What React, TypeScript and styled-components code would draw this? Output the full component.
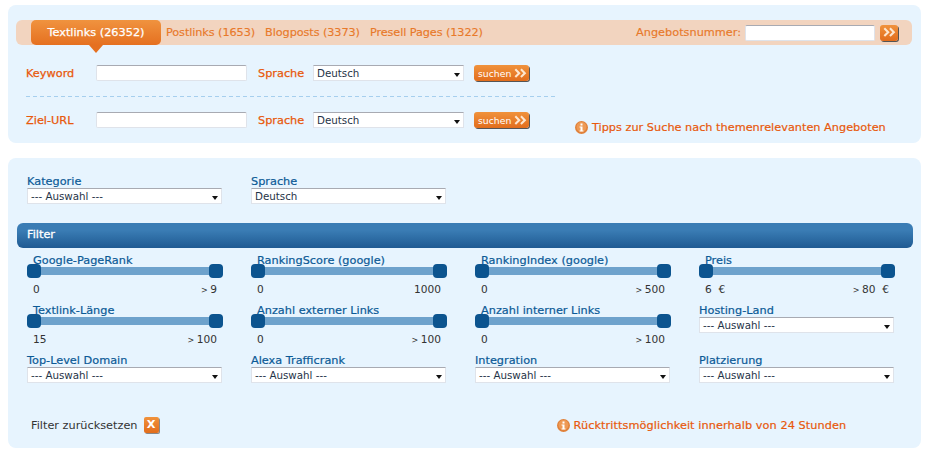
import * as React from 'react';
import styled, { createGlobalStyle } from 'styled-components';

const GlobalStyle = createGlobalStyle`
  html, body {
    margin: 0;
    padding: 0;
    background: #fff;
    font-family: "DejaVu Sans", Verdana, sans-serif;
    font-size: 11.3px;
  }
`;

const Page = styled.div`
  width: 934px;
  height: 453px;
  padding: 5px 13px 0 8px;
  box-sizing: border-box;
  display: flex;
  flex-direction: column;
  gap: 15px;
`;

const Card = styled.div<{ $height: number }>`
  height: ${p => p.$height}px;
  box-sizing: border-box;
  background: #e7f4fe;
  border-radius: 8px;
`;

const SearchCard = styled(Card)`
  padding: 15px 9px 0 8px;
`;

const TabBar = styled.div`
  height: 25px;
  background: #f2d4bf;
  border-radius: 6px;
  display: flex;
  align-items: center;
  padding: 0 14px 0 15px;
`;

const ActiveTab = styled.div`
  position: relative;
  width: 130px;
  height: 25px;
  margin-right: 5px;
  border-radius: 5px;
  background: linear-gradient(#f0933f, #e57020);
  color: #fff;
  -webkit-text-stroke: 0.25px #fff;
  text-align: center;
  line-height: 25px;

  &::after {
    content: '';
    position: absolute;
    left: 58px;
    top: 25px;
    border: 7px solid transparent;
    border-bottom: 0;
    border-top: 8px solid #e57020;
  }
`;

const Tab = styled.div`
  color: #e8792a;
  margin-right: 10px;
  letter-spacing: -0.1px;
  -webkit-text-stroke: 0.15px #e8792a;
`;

const OfferLabel = styled(Tab)`
  margin-right: 4px;
  letter-spacing: 0;
`;

const Spacer = styled.div`
  flex: 1;
`;

const TextInput = styled.input<{ $width: number }>`
  width: ${p => p.$width}px;
  height: 16px;
  box-sizing: border-box;
  padding: 0;
  background: #fff;
  border: 1px solid #dfe3ea;
  border-top-color: #a8aab2;
  border-radius: 2px;
  outline: none;
`;

const ArrowButton = styled.button`
  width: 18px;
  height: 16px;
  margin-left: 5px;
  padding: 0;
  border: 0;
  border-radius: 3px;
  background: linear-gradient(#f0923c, #e26d1c);
  box-shadow: 1px 1px 0 #555;
  display: flex;
  align-items: center;
  justify-content: center;
`;

const SearchRow = styled.div<{ $top?: number }>`
  height: 16px;
  display: flex;
  align-items: center;
  padding-left: 10px;
  margin-top: ${p => p.$top ?? 0}px;
`;

const SearchLabel = styled.div<{ $width: number; $left?: number }>`
  width: ${p => p.$width}px;
  margin-left: ${p => p.$left ?? 0}px;
  color: #e8590c;
  -webkit-text-stroke: 0.25px #e8590c;
`;

const SelectBox = styled.div<{ $width: number }>`
  position: relative;
  width: ${p => p.$width}px;
  height: 16px;
  box-sizing: border-box;
  background: #fff;
  border: 1px solid #dfe3ea;
  border-top-color: #a8aab2;
  padding-left: 3px;
  color: #1f3347;
  font-size: 10.3px;
  line-height: 14px;

  &::after {
    content: '';
    position: absolute;
    right: 3px;
    top: 7px;
    border: 3.5px solid transparent;
    border-bottom: 0;
    border-top: 4px solid #111;
  }
`;

const SearchButton = styled.button`
  width: 55px;
  height: 16px;
  margin-left: 10px;
  padding: 0 0 0 4px;
  border: 0;
  border-radius: 3px;
  background: linear-gradient(#f0923c, #e26d1c);
  box-shadow: 1px 1px 0 #555;
  color: #fff;
  font-family: inherit;
  font-size: 9.3px;
  display: flex;
  align-items: center;
  gap: 3px;
`;

const DashLine = styled.div`
  width: 530px;
  height: 1px;
  margin: 15px 0 15px 10px;
  background: repeating-linear-gradient(90deg, #a6cfee 0 4px, transparent 4px 7px);
`;

const TipRow = styled.div<{ $left: number; $top?: number; $spacing?: number }>`
  display: flex;
  align-items: center;
  gap: 4px;
  margin-left: ${p => p.$left}px;
  margin-top: ${p => p.$top ?? 0}px;
  color: #e8590c;
  letter-spacing: ${p => p.$spacing ?? 0}px;
  -webkit-text-stroke: 0.2px #e8590c;
`;

const FilterCard = styled(Card)`
  padding: 16px 8px 0 9px;
`;

const TopFields = styled.div`
  display: flex;
  gap: 29px;
  padding-left: 10px;
`;

const Field = styled.div`
  width: 195px;
`;

const FieldLabel = styled.div<{ $indent?: number }>`
  height: 15px;
  line-height: 15px;
  padding-left: ${p => p.$indent ?? 0}px;
  color: #0b5a96;
  -webkit-text-stroke: 0.2px #0b5a96;
  white-space: nowrap;
`;

const SelectLabel = styled(FieldLabel)`
  height: 14px;
`;

const FilterBar = styled.div`
  height: 25px;
  margin-top: 19px;
  padding-left: 10px;
  border-radius: 6px;
  background: linear-gradient(#3a7cb4 30%, #1f5a92);
  color: #fff;
  -webkit-text-stroke: 0.3px #fff;
  line-height: 24px;
`;

const FilterGrid = styled.div`
  display: grid;
  grid-template-columns: repeat(4, 195px);
  grid-auto-rows: 50px;
  column-gap: 29px;
  padding: 5px 0 0 10px;
`;

const Track = styled.div`
  position: relative;
  height: 8px;
  margin: -1px -1px 0 0;
  background: #6ea2cc;
`;

const Thumb = styled.span<{ $side: 'left' | 'right' }>`
  position: absolute;
  top: -3px;
  ${p => p.$side}: 0;
  width: 14px;
  height: 14px;
  border-radius: 4px;
  background: #0c548f;
`;

const Values = styled.div`
  display: flex;
  justify-content: space-between;
  padding: 0 5px 0 6px;
  margin-top: 8px;
  color: #333;
  font-size: 10.6px;
  white-space: pre;
`;

const Gt = styled.small`
  font-size: 8px;
`;

const BottomRow = styled.div`
  display: flex;
  align-items: center;
  margin-top: 14px;
  padding-left: 14px;
  color: #333;
`;

const ResetButton = styled.span`
  width: 15px;
  height: 16px;
  margin-left: 6px;
  border-radius: 2px;
  background: linear-gradient(#f0923c, #e26d1c);
  box-shadow: 1px 1px 0 #888;
  color: #fff;
  font-weight: 700;
  line-height: 16px;
  text-align: center;
`;

const Chevrons = ({ size }: { size: number }) => (
  <svg width={size} height={size * 0.8} viewBox="0 0 15 12" fill="none" stroke="#fde6cf" strokeWidth="2.4">
    <path d="M1.5 1.5 6 6l-4.500 4.500M8 1.500 12.500 6 8 10.500" />
  </svg>
);

const InfoIcon = () => (
  <svg width="13" height="13" viewBox="0 0 13 13">
    <circle cx="6.500" cy="6.500" r="6.500" fill="#e0813a" />
    <circle cx="6.500" cy="6" r="5" fill="#ee9a55" />
    <rect x="5.500" y="2.500" width="2" height="2" fill="#fff" />
    <path d="M4.500 5.500h3v4h1v1h-4v-1h1v-3h-1z" fill="#fff" />
  </svg>
);

const SliderField = ({ label, low, high }: { label: string; low: string; high: string }) => (
  <Field>
    <FieldLabel $indent={6}>{label}</FieldLabel>
    <Track>
      <Thumb $side="left" />
      <Thumb $side="right" />
    </Track>
    <Values>
      <span>{low}</span>
      <span>
        {high.startsWith('>') ? <Gt>&gt; </Gt> : null}
        {high.replace('> ', '')}
      </span>
    </Values>
  </Field>
);

const SelectField = ({ label, value = '--- Auswahl ---' }: { label: string; value?: string }) => (
  <Field>
    <SelectLabel>{label}</SelectLabel>
    <SelectBox $width={195}>{value}</SelectBox>
  </Field>
);

const LanguageRow = ({ label, top }: { label: string; top?: number }) => (
  <SearchRow $top={top}>
    <SearchLabel $width={70}>{label}</SearchLabel>
    <TextInput $width={151} />
    <SearchLabel $width={55} $left={11}>Sprache</SearchLabel>
    <SelectBox $width={151}>Deutsch</SelectBox>
    <SearchButton>
      suchen
      <Chevrons size={13} />
    </SearchButton>
  </SearchRow>
);

export default function App() {
  return (
    <Page>
      <GlobalStyle />
      <SearchCard $height={138}>
        <TabBar>
          <ActiveTab>Textlinks (26352)</ActiveTab>
          <Tab>Postlinks (1653)</Tab>
          <Tab>Blogposts (3373)</Tab>
          <Tab>Presell Pages (1322)</Tab>
          <Spacer />
          <OfferLabel>Angebotsnummer:</OfferLabel>
          <TextInput $width={130} />
          <ArrowButton>
            <Chevrons size={13} />
          </ArrowButton>
        </TabBar>
        <LanguageRow label="Keyword" top={20} />
        <DashLine />
        <LanguageRow label="Ziel-URL" />
        <TipRow $left={559} $top={-7}>
          <InfoIcon />
          Tipps zur Suche nach themenrelevanten Angeboten
        </TipRow>
      </SearchCard>
      <FilterCard $height={290}>
        <TopFields>
          <SelectField label="Kategorie" />
          <SelectField label="Sprache" value="Deutsch" />
        </TopFields>
        <FilterBar>Filter</FilterBar>
        <FilterGrid>
          <SliderField label="Google-PageRank" low="0" high="> 9" />
          <SliderField label="RankingScore (google)" low="0" high="1000" />
          <SliderField label="RankingIndex (google)" low="0" high="> 500" />
          <SliderField label="Preis" low="6  €" high="> 80  €" />
          <SliderField label="Textlink-Länge" low="15" high="> 100" />
          <SliderField label="Anzahl externer Links" low="0" high="> 100" />
          <SliderField label="Anzahl interner Links" low="0" high="> 100" />
          <SelectField label="Hosting-Land" />
          <SelectField label="Top-Level Domain" />
          <SelectField label="Alexa Trafficrank" />
          <SelectField label="Integration" />
          <SelectField label="Platzierung" />
        </FilterGrid>
        <BottomRow>
          Filter zurücksetzen
          <ResetButton>X</ResetButton>
          <TipRow $left={398} $spacing={0.07}>
            <InfoIcon />
            Rücktrittsmöglichkeit innerhalb von 24 Stunden
          </TipRow>
        </BottomRow>
      </FilterCard>
    </Page>
  );
}
